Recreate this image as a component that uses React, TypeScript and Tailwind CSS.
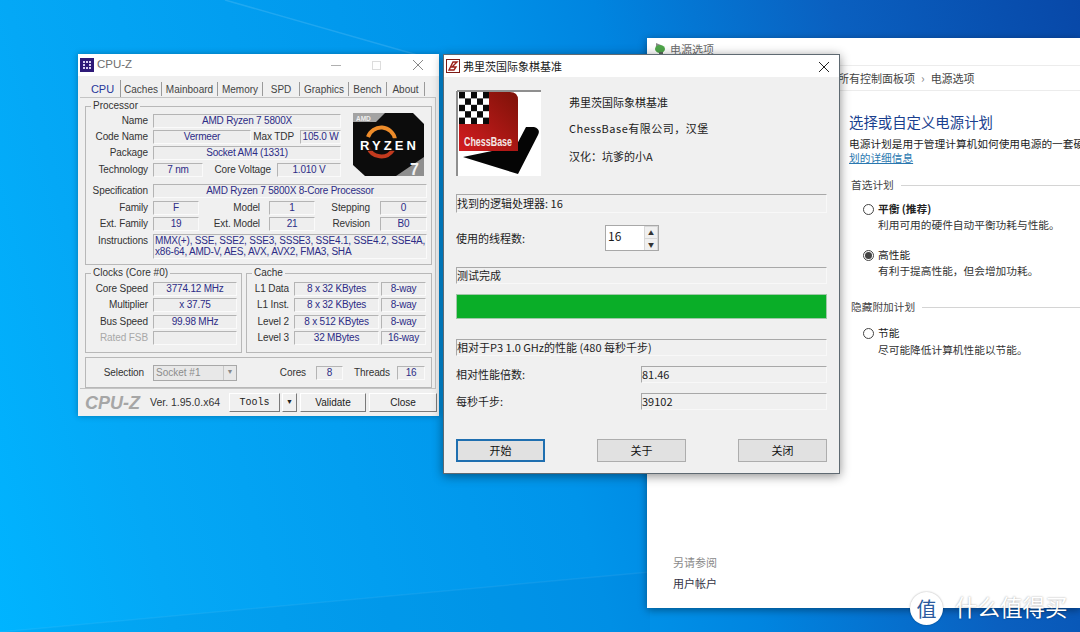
import type { ReactNode } from "react";

const sans = "font-['Liberation_Sans','Noto_Sans_CJK_SC',sans-serif]";
const cjk = "font-['Noto_Sans_CJK_SC','Liberation_Sans',sans-serif]";

// CPU-Z sunken value box
const Field = ({ w, h = "h-[14px]", children, className = "" }: { w: string; h?: string; children?: ReactNode; className?: string }) => (
  <div
    className={`${w} ${h} ${className} flex shrink-0 items-center justify-center border border-t-[#b4b4b4] border-l-[#b4b4b4] border-r-[#fafafa] border-b-[#fafafa] bg-[#eeeeee] text-[10px] leading-none tracking-[-0.2px] whitespace-nowrap text-[#2c2c86]`}
  >
    {children}
  </div>
);

const Label = ({ w = "w-[62px]", children, className = "" }: { w?: string; children: ReactNode; className?: string }) => (
  <div className={`${w} ${className} shrink-0 text-right text-[10px] leading-none tracking-[-0.1px] whitespace-nowrap text-[#333333]`}>{children}</div>
);

const Group = ({ title, className, children }: { title: string; className: string; children: ReactNode }) => (
  <div className={`relative border border-[#b8b8b8] ${className}`}>
    <div className="absolute -top-[6px] left-[5px] bg-[#f0f0f0] px-[2px] text-[10px] leading-none text-[#333333]">{title}</div>
    {children}
  </div>
);

const RyzenLogo = () => (
  <svg viewBox="0 0 71 63" className="h-[63px] w-[71px] shrink-0 overflow-visible">
    <polygon points="0,0 60,0 71,11 71,63 12,63 0,52" fill="#0c0c0c" />
    <polygon points="0,0 32,0 23,9 0,9" fill="#a3a3a3" />
    <text x="3" y="7.5" fontSize="6.5" fontWeight="700" fill="#eeeeee" fontFamily="Liberation Sans">AMD</text>
    <path d="M15 24 A14 14 0 0 1 42 26" fill="none" stroke="#ee8c2a" strokeWidth="4" />
    <path d="M40 37 A14 14 0 0 1 15 34" fill="none" stroke="#c23a1e" strokeWidth="4" />
    <rect x="5" y="25" width="60" height="13" fill="#0c0c0c" opacity="0.75" />
    <text x="7" y="37" fontSize="13" fontWeight="700" fill="#ffffff" fontFamily="Liberation Sans" textLength="56" lengthAdjust="spacing">RYZEN</text>
    <polygon points="71,44 71,63 43,63" fill="#8f8f8f" />
    <text x="57" y="61.5" fontSize="16" fontWeight="700" fill="#f2f2f2" fontFamily="Liberation Sans">7</text>
  </svg>
);

const tabs = [
  { name: "Caches", w: "w-[41px]" },
  { name: "Mainboard", w: "w-[56px]" },
  { name: "Memory", w: "w-[45px]" },
  { name: "SPD", w: "w-[37px]" },
  { name: "Graphics", w: "w-[49px]" },
  { name: "Bench", w: "w-[38px]" },
  { name: "About", w: "w-[38px]" },
];

const clocks = [
  ["Core Speed", "3774.12 MHz"],
  ["Multiplier", "x 37.75"],
  ["Bus Speed", "99.98 MHz"],
  ["Rated FSB", ""],
];

const cache = [
  ["L1 Data", "8 x 32 KBytes", "8-way"],
  ["L1 Inst.", "8 x 32 KBytes", "8-way"],
  ["Level 2", "8 x 512 KBytes", "8-way"],
  ["Level 3", "32 MBytes", "16-way"],
];

const rowGaps = ["mt-0", "mt-[2px]", "mt-[3px]", "mt-[2px]"];

const CpuZ = () => (
  <div className={`absolute top-[54px] left-[78px] flex h-[362px] w-[361px] flex-col bg-[#f0f0f0] shadow-[0_0_6px_rgba(0,0,0,0.3)] ${sans}`}>
    {/* Title bar */}
    <div className="flex h-[22px] shrink-0 items-center bg-white pl-[2px]">
      <div className="flex h-[14px] w-[14px] items-center justify-center bg-[#2e1a78]">
        <div className="h-[8px] w-[8px] border-2 border-dotted border-[#d8d0f0]" />
      </div>
      <span className="ml-[3px] text-[11.5px] text-[#6e6e6e]">CPU-Z</span>
      <div className="mr-[31px] ml-auto h-px w-[10px] bg-[#b0b0b0]" />
      <div className="mr-[32px] h-[9px] w-[9px] border border-[#dddddd]" />
      <svg viewBox="0 0 10 10" className="mr-[16px] h-[10px] w-[10px]">
        <path d="M0 0 L10 10 M10 0 L0 10" stroke="#888888" strokeWidth="1" />
      </svg>
    </div>

    {/* Tabs */}
    <div className="mt-[5px] ml-[7px] flex h-[16px] shrink-0 items-center text-[10px] text-[#444444]">
      <div className="flex h-[18px] w-[36px] items-center justify-center border-r border-[#9a9a9a] text-[11px] text-[#27379a]">CPU</div>
      {tabs.map((tab) => (
        <div key={tab.name} className={`${tab.w} flex h-[14px] items-center justify-center border-r border-[#9a9a9a]`}>
          {tab.name}
        </div>
      ))}
    </div>

    {/* Tab page */}
    <div className="mr-[3px] ml-[2px] h-[292px] shrink-0 border-t border-r border-b border-[#c4c4c4] pt-[8px] pl-[5px]">
      <Group title="Processor" className="h-[159px] w-[347px] pt-[7px]">
        <div className="flex">
          <div className="flex w-[255px] flex-col">
            <div className="flex items-center">
              <Label>Name</Label>
              <Field w="w-[188px] ml-[5px]">AMD Ryzen 7 5800X</Field>
            </div>
            <div className="mt-[2px] flex items-center">
              <Label>Code Name</Label>
              <Field w="w-[98px] ml-[5px]">Vermeer</Field>
              <Label w="w-[43px]">Max TDP</Label>
              <Field w="w-[41px] ml-[6px]">105.0 W</Field>
            </div>
            <div className="mt-[2px] flex items-center">
              <Label>Package</Label>
              <Field w="w-[188px] ml-[5px]">Socket AM4 (1331)</Field>
            </div>
            <div className="mt-[3px] flex items-center">
              <Label>Technology</Label>
              <Field w="w-[50px] ml-[5px]">7 nm</Field>
              <Label w="w-[68px]">Core Voltage</Label>
              <Field w="w-[64px] ml-[6px]">1.010 V</Field>
            </div>
          </div>
          <div className="-mt-px ml-[12px]">
            <RyzenLogo />
          </div>
        </div>
        <div className="mt-[7px] flex items-center">
          <Label>Specification</Label>
          <Field w="w-[274px] ml-[5px]">AMD Ryzen 7 5800X 8-Core Processor</Field>
        </div>
        <div className="mt-[3px] flex items-center">
          <Label>Family</Label>
          <Field w="w-[46px] ml-[5px]">F</Field>
          <Label w="w-[61px]">Model</Label>
          <Field w="w-[46px] ml-[9px]">1</Field>
          <Label w="w-[55px]">Stepping</Label>
          <Field w="w-[47px] ml-[10px]">0</Field>
        </div>
        <div className="mt-[2px] flex items-center">
          <Label>Ext. Family</Label>
          <Field w="w-[46px] ml-[5px]">19</Field>
          <Label w="w-[61px]">Ext. Model</Label>
          <Field w="w-[46px] ml-[9px]">21</Field>
          <Label w="w-[55px]">Revision</Label>
          <Field w="w-[47px] ml-[10px]">B0</Field>
        </div>
        <div className="mt-[3px] flex items-start">
          <Label className="mt-[2px]">Instructions</Label>
          <Field w="w-[274px] ml-[5px] !items-start !justify-start pl-[1px]" h="h-[25px]">
            <span className="leading-[11px]">
              MMX(+), SSE, SSE2, SSE3, SSSE3, SSE4.1, SSE4.2, SSE4A,
              <br />
              x86-64, AMD-V, AES, AVX, AVX2, FMA3, SHA
            </span>
          </Field>
        </div>
      </Group>

      <div className="mt-[8px] flex gap-[4px]">
        <Group title="Clocks (Core #0)" className="h-[80px] w-[157px] pt-[8px]">
          {clocks.map(([label, value], i) => (
            <div key={label} className={`flex items-center ${rowGaps[i]}`}>
              <Label className={i === 3 ? "!text-[#a8a8a8]" : ""}>{label}</Label>
              <Field w="w-[84px] ml-[5px]">{value}</Field>
            </div>
          ))}
        </Group>
        <Group title="Cache" className="h-[80px] w-[186px] pt-[8px]">
          {cache.map(([label, size, way], i) => (
            <div key={label} className={`flex items-center ${rowGaps[i]}`}>
              <Label w="w-[42px]">{label}</Label>
              <Field w="w-[85px] ml-[5px]">{size}</Field>
              <Field w="w-[45px] ml-[2px]">{way}</Field>
            </div>
          ))}
        </Group>
      </div>

      <div className="mt-[4px] flex h-[31px] w-[347px] items-center border border-[#b8b8b8]">
        <Label w="w-[58px]">Selection</Label>
        <div className="ml-[9px] flex h-[16px] w-[84px] items-center justify-between border border-[#a8a8a8] bg-[#e8e8e8] pl-[2px] text-[10px] text-[#8c8c8c]">
          Socket #1
          <div className="flex h-full w-[13px] items-center justify-center border-l border-[#c8c8c8] text-[7px] text-[#888888]">▼</div>
        </div>
        <Label w="w-[69px]">Cores</Label>
        <Field w="w-[27px] ml-[10px]">8</Field>
        <Label w="w-[47px]">Threads</Label>
        <Field w="w-[28px] ml-[7px]">16</Field>
      </div>
    </div>

    {/* Bottom bar */}
    <div className="flex flex-1 items-center pl-[7px]">
      <span className="w-[65px] text-[18px] leading-none font-bold text-[#a6a6a6] italic">CPU-Z</span>
      <span className="w-[79px] text-[10.5px] leading-none text-[#333333]">Ver. 1.95.0.x64</span>
      <div className="flex h-[19px] w-[51px] items-center justify-center border border-t-white border-r-[#7a7a7a] border-b-[#7a7a7a] border-l-white font-['Liberation_Mono',monospace] text-[10px] text-[#222222]">Tools</div>
      <div className="ml-[2px] flex h-[19px] w-[15px] items-center justify-center border border-t-white border-r-[#7a7a7a] border-b-[#7a7a7a] border-l-white text-[7px] text-[#222222]">▼</div>
      <div className="ml-[3px] flex h-[19px] w-[66px] items-center justify-center border border-t-white border-r-[#7a7a7a] border-b-[#7a7a7a] border-l-white text-[10px] text-[#222222]">Validate</div>
      <div className="ml-[3px] flex h-[19px] w-[68px] items-center justify-center border border-t-white border-r-[#7a7a7a] border-b-[#7a7a7a] border-l-white text-[10px] text-[#222222]">Close</div>
    </div>
  </div>
);

const ChessLogo = () => (
  <svg viewBox="0 0 85 86" className="h-[86px] w-[85px] shrink-0">
    <defs>
      <linearGradient id="red" x1="0" y1="1" x2="1" y2="0">
        <stop offset="0" stopColor="#d41c20" />
        <stop offset="1" stopColor="#7d1208" />
      </linearGradient>
    </defs>
    <rect width="85" height="86" fill="#ffffff" />
    <path d="M1 1 H85 M1 1 V86" stroke="#8f8f8f" strokeWidth="2" fill="none" />
    <path d="M7 67 L60 56 L70 37 L78 37 Q85 39 82 45 L62 84 Z" fill="#050505" />
    <path d="M3 2 H54 Q62 2 62 10 V61 H3 Z" fill="url(#red)" />
    <rect x="3" y="2" width="30" height="32" fill="#ffffff" />
    {[0, 1, 2, 3, 4].map((r) =>
      [0, 1, 2, 3, 4].map((c) =>
        (r + c) % 2 === 0 ? <rect key={`${r}-${c}`} x={3 + c * 6} y={2 + r * 6.4} width="6" height="6.4" fill="#0a0a0a" /> : null,
      ),
    )}
    <text x="8" y="56" fontSize="12" fontWeight="700" fill="#f4e8e8" fontFamily="Liberation Sans" textLength="48" lengthAdjust="spacingAndGlyphs">ChessBase</text>
  </svg>
);

const Sunken = ({ className, children }: { className: string; children?: ReactNode }) => (
  <div className={`flex items-center border border-t-[#a8a8a8] border-r-[#f8f8f8] border-b-[#f8f8f8] border-l-[#a8a8a8] text-[11px] leading-none whitespace-nowrap text-[#1c1c1c] ${className}`}>
    {children}
  </div>
);

const ChessButton = ({ label, active }: { label: string; active?: boolean }) => (
  <div className={`flex h-[23px] w-[89px] items-center justify-center border bg-[#e1e1e1] text-[11px] text-[#111111] ${active ? "border-2 border-[#1f6fb0]" : "border-[#adadad]"}`}>
    {label}
  </div>
);

const Chess = () => (
  <div className={`absolute top-[54px] left-[443px] flex h-[420px] w-[397px] flex-col border border-[#5f6a72] bg-[#f0f0f0] shadow-[0_2px_10px_rgba(0,0,0,0.45)] ${cjk}`}>
    <div className="flex h-[22px] shrink-0 items-center bg-white pl-[2px]">
      <svg viewBox="0 0 14 14" className="h-[14px] w-[14px]">
        <rect x="0.5" y="0.5" width="13" height="13" fill="#ffffff" stroke="#7d1a14" />
        <path d="M3 11 L7 3 H11 L6 8 L10 8 L8 11 Z" fill="none" stroke="#9c1f18" strokeWidth="1.4" />
      </svg>
      <span className="ml-[3px] text-[11px] text-[#1a1a1a]">弗里茨国际象棋基准</span>
      <svg viewBox="0 0 10 10" className="mt-px mr-[10px] ml-auto h-[10px] w-[10px]">
        <path d="M0 0 L10 10 M10 0 L0 10" stroke="#222222" strokeWidth="1" />
      </svg>
    </div>

    <div className="flex flex-col pt-[13px] pl-[12px]">
      <div className="flex h-[86px]">
        <ChessLogo />
        <div className="ml-[28px] flex flex-col pt-[7px] text-[11px] leading-none text-[#1c1c1c]">
          <span>弗里茨国际象棋基准</span>
          <span className="mt-[15px] tracking-[0.5px]">ChessBase有限公司，汉堡</span>
          <span className="mt-[17px]">汉化：坑爹的小A</span>
        </div>
      </div>
      <Sunken className="mt-[18px] h-[19px] w-[371px]">找到的逻辑处理器: 16</Sunken>
      <div className="mt-[12px] flex h-[26px] items-center text-[11px] text-[#1c1c1c]">
        <span className="w-[149px]">使用的线程数:</span>
        <div className="flex h-[26px] w-[54px] border border-[#a8a8a8] bg-white">
          <span className="flex-1 pt-[2px] pl-[2px] text-[12px] leading-[16px]">16</span>
          <div className="flex w-[14px] flex-col gap-px bg-[#d8d8d8] p-px text-center text-[6px] leading-[11px] text-[#333333]">
            <div className="flex-1 bg-[#f0f0f0]">▲</div>
            <div className="flex-1 bg-[#f0f0f0]">▼</div>
          </div>
        </div>
      </div>
      <Sunken className="mt-[16px] h-[17px] w-[371px]">测试完成</Sunken>
      <div className="mt-[10px] h-[25px] w-[371px] border border-[#a0c8a8] bg-[#0aae28]" />
      <Sunken className="mt-[20px] h-[17px] w-[371px]">相对于P3 1.0 GHz的性能 (480 每秒千步)</Sunken>
      <div className="mt-[10px] flex items-center text-[11px] text-[#1c1c1c]">
        <span className="w-[185px]">相对性能倍数:</span>
        <Sunken className="h-[17px] w-[186px]">81.46</Sunken>
      </div>
      <div className="mt-[10px] flex items-center text-[11px] text-[#1c1c1c]">
        <span className="w-[185px]">每秒千步:</span>
        <Sunken className="h-[17px] w-[186px]">39102</Sunken>
      </div>
      <div className="mt-[29px] flex w-[371px] justify-between">
        <ChessButton label="开始" active />
        <ChessButton label="关于" />
        <ChessButton label="关闭" />
      </div>
    </div>
  </div>
);

const Radio = ({ checked }: { checked?: boolean }) => (
  <div className="flex h-[11px] w-[11px] shrink-0 items-center justify-center rounded-full border border-[#444444] bg-white">
    {checked && <div className="h-[7px] w-[7px] rounded-full bg-[#444444]" />}
  </div>
);

const Plan = ({ name, desc, checked, bold, className = "", descGap = "mt-[2px]" }: { name: string; desc: string; checked?: boolean; bold?: boolean; className?: string; descGap?: string }) => (
  <div className={`ml-[14px] ${className}`}>
    <div className="flex items-center gap-[4px]">
      <Radio checked={checked} />
      <span className={`text-[10.7px] leading-[14px] text-[#222222] ${bold ? "font-bold" : ""}`}>{name}</span>
    </div>
    <div className={`${descGap} ml-[15px] text-[10.7px] leading-[14px] whitespace-nowrap text-[#333333]`}>{desc}</div>
  </div>
);

const SectionHead = ({ title, className = "" }: { title: string; className?: string }) => (
  <div className={`ml-[2px] flex items-center gap-[7px] ${className}`}>
    <span className="text-[10.7px] leading-[14px] whitespace-nowrap text-[#444444]">{title}</span>
    <div className="h-px flex-1 bg-[#d4d4d4]" />
  </div>
);

const Power = () => (
  <div className={`absolute top-[38px] left-[647px] flex h-[570px] w-[433px] flex-col overflow-hidden bg-white shadow-[0_2px_8px_rgba(0,0,0,0.4)] ${cjk}`}>
    <div className="flex h-[27px] shrink-0 items-center pb-[5px] pl-[6px]">
      <svg viewBox="0 0 14 14" className="h-[14px] w-[14px]">
        <path d="M3 1 L8 3 L7 7 L3 5 Z" fill="#8a8a8a" />
        <ellipse cx="7" cy="7" rx="5" ry="4" fill="#4fa64a" />
        <path d="M6 10 H10 V14 H6 Z" fill="#5c6a60" />
      </svg>
      <span className="ml-[3px] text-[11px] text-[#6a6a6a]">电源选项</span>
    </div>
    <div className="flex h-[26px] shrink-0 items-center border-y border-[#ececec] pl-[191px] text-[11px] text-[#444444]">
      所有控制面板项
      <span className="mx-[6px] text-[12px] leading-none text-[#888888]">›</span>
      电源选项
    </div>
    <div className="flex min-h-0 flex-1">
      <div className="flex w-[202px] shrink-0 flex-col justify-end pb-[18px] pl-[26px] text-[11px] leading-[14px]">
        <span className="text-[#8a8a8a]">另请参阅</span>
        <span className="mt-[7px] text-[#333344]">用户帐户</span>
      </div>
      <div className="min-w-0 flex-1 pt-[21px]">
        <div className="text-[14.4px] leading-[20px] text-[#1a3f8f]">选择或自定义电源计划</div>
        <div className="mt-[5px] text-[10.7px] leading-[14px] whitespace-nowrap text-[#222222]">电源计划是用于管理计算机如何使用电源的一套硬件和系统设置。</div>
        <div className="text-[10.7px] leading-[14px] text-[#2a78b0] underline">划的详细信息</div>
        <SectionHead title="首选计划" className="mt-[13px]" />
        <Plan name="平衡 (推荐)" desc="利用可用的硬件自动平衡功耗与性能。" bold className="mt-[10px]" />
        <Plan name="高性能" desc="有利于提高性能，但会增加功耗。" checked className="mt-[16px]" />
        <SectionHead title="隐藏附加计划" className="mt-[22px]" />
        <Plan name="节能" desc="尽可能降低计算机性能以节能。" className="mt-[12px]" descGap="mt-[3px]" />
      </div>
    </div>
  </div>
);

export default function App() {
  return (
    <div className="relative h-[632px] w-[1080px] overflow-hidden bg-[linear-gradient(75deg,#00b4ff_0%,#04a8f6_14%,#0094ea_49%,#0085e0_61%,#0a60c0_80%,#0850b0_93%,#0848a8_100%)]">
      {/* Wallpaper light rays */}
      <svg viewBox="0 0 1080 632" className="absolute inset-0 h-full w-full">
        <path d="M225 0 L435 60" stroke="#ffffff" strokeOpacity="0.12" strokeWidth="1.5" fill="none" />
        <polygon points="0,632 650,572 650,632" fill="#003a90" fillOpacity="0.05" />
        <path d="M0 632 L650 572" stroke="#ffffff" strokeOpacity="0.06" strokeWidth="1.5" fill="none" />
      </svg>
      <Power />
      <CpuZ />
      <Chess />
      {/* Watermark */}
      <div className="absolute top-[592px] left-[910px] flex items-center text-white">
        <div className={`flex h-[33px] w-[33px] items-center justify-center rounded-full bg-white text-[20px] leading-none text-[#2a5a9e] shadow-[0_0_2px_rgba(0,0,0,0.35)] ${cjk}`}>值</div>
        <span className={`-mt-[5px] ml-[12px] text-[22.5px] leading-[28px] [text-shadow:0_0_2px_rgba(0,0,0,0.4)] ${cjk}`}>什么值得买</span>
      </div>
    </div>
  );
}
